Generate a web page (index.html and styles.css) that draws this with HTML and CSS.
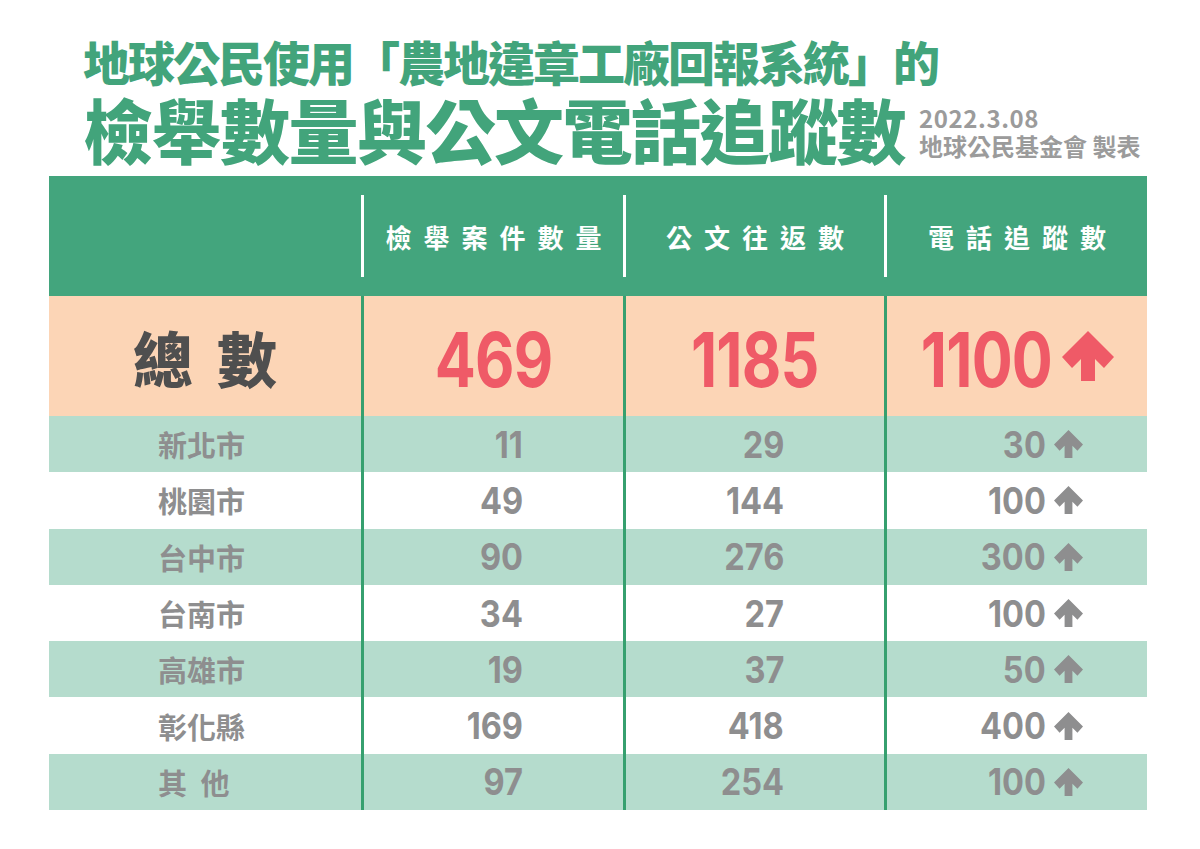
FILE: index.html
```html
<!DOCTYPE html>
<html lang="zh-Hant">
<head>
<meta charset="utf-8">
<title>檢舉數量與公文電話追蹤數</title>
<link rel="stylesheet" href="styles.css">
</head>
<body>
<div class="poster">
  <header class="heading">
    <h1 class="title-top">地球公民使用「農地違章工廠回報系統」的</h1>
    <div class="title-row">
      <h2 class="title-main">檢舉數量與公文電話追蹤數</h2>
      <div class="credit">
        <div class="date">2022.3.08</div>
        <div class="maker">地球公民基金會 製表</div>
      </div>
    </div>
  </header>

  <div class="table">
    <div class="row head">
      <div class="cell"></div>
      <div class="cell">檢舉案件數量</div>
      <div class="cell">公文往返數</div>
      <div class="cell">電話追蹤數</div>
    </div>
    <div class="row total">
      <div class="cell label"><span>總</span><span>數</span></div>
      <div class="cell"><span class="num">469</span></div>
      <div class="cell"><span class="num">1185</span></div>
      <div class="cell"><span class="num num-arrow">1100</span><svg class="up up-big" viewBox="0 0 52 50"><path d="M26 0 L52 26 L42 37 L33 28 L33 50 L19 50 L19 28 L10 37 L0 26 Z"/></svg></div>
    </div>
    <div class="row data tint">
      <div class="cell city">新北市</div>
      <div class="cell n"><span class="v">11</span></div>
      <div class="cell n"><span class="v">29</span></div>
      <div class="cell n last"><span class="v">30</span><svg class="up" viewBox="0 0 52 50"><path d="M26 0 L52 26 L42 37 L33 28 L33 50 L19 50 L19 28 L10 37 L0 26 Z"/></svg></div>
    </div>
    <div class="row data">
      <div class="cell city">桃園市</div>
      <div class="cell n"><span class="v">49</span></div>
      <div class="cell n"><span class="v">144</span></div>
      <div class="cell n last"><span class="v">100</span><svg class="up" viewBox="0 0 52 50"><path d="M26 0 L52 26 L42 37 L33 28 L33 50 L19 50 L19 28 L10 37 L0 26 Z"/></svg></div>
    </div>
    <div class="row data tint">
      <div class="cell city">台中市</div>
      <div class="cell n"><span class="v">90</span></div>
      <div class="cell n"><span class="v">276</span></div>
      <div class="cell n last"><span class="v">300</span><svg class="up" viewBox="0 0 52 50"><path d="M26 0 L52 26 L42 37 L33 28 L33 50 L19 50 L19 28 L10 37 L0 26 Z"/></svg></div>
    </div>
    <div class="row data">
      <div class="cell city">台南市</div>
      <div class="cell n"><span class="v">34</span></div>
      <div class="cell n"><span class="v">27</span></div>
      <div class="cell n last"><span class="v">100</span><svg class="up" viewBox="0 0 52 50"><path d="M26 0 L52 26 L42 37 L33 28 L33 50 L19 50 L19 28 L10 37 L0 26 Z"/></svg></div>
    </div>
    <div class="row data tint">
      <div class="cell city">高雄市</div>
      <div class="cell n"><span class="v">19</span></div>
      <div class="cell n"><span class="v">37</span></div>
      <div class="cell n last"><span class="v">50</span><svg class="up" viewBox="0 0 52 50"><path d="M26 0 L52 26 L42 37 L33 28 L33 50 L19 50 L19 28 L10 37 L0 26 Z"/></svg></div>
    </div>
    <div class="row data">
      <div class="cell city">彰化縣</div>
      <div class="cell n"><span class="v">169</span></div>
      <div class="cell n"><span class="v">418</span></div>
      <div class="cell n last"><span class="v">400</span><svg class="up" viewBox="0 0 52 50"><path d="M26 0 L52 26 L42 37 L33 28 L33 50 L19 50 L19 28 L10 37 L0 26 Z"/></svg></div>
    </div>
    <div class="row data tint">
      <div class="cell city">其 他</div>
      <div class="cell n"><span class="v">97</span></div>
      <div class="cell n"><span class="v">254</span></div>
      <div class="cell n last"><span class="v">100</span><svg class="up" viewBox="0 0 52 50"><path d="M26 0 L52 26 L42 37 L33 28 L33 50 L19 50 L19 28 L10 37 L0 26 Z"/></svg></div>
    </div>
  </div>
</div>
</body>
</html>
```

FILE: styles.css
```css
* { box-sizing: border-box; }
html, body { margin: 0; padding: 0; background: #fff; }
body {
  font-family: "Noto Sans CJK TC", "Noto Sans", sans-serif;
  width: 1200px;
  height: 849px;
  overflow: hidden;
}
.poster {
  padding: 36px 53px 0 49px;
}
.heading {
  padding-left: 34px;
  color: #42a47b;
}
.title-top {
  margin: 0;
  font-size: 47px;
  line-height: 50px;
  font-weight: 900;
  letter-spacing: -2px;
  white-space: nowrap;
}
.title-row {
  display: flex;
  align-items: flex-end;
  gap: 14px;
  margin-top: 6px;
}
.title-main {
  margin: 0;
  font-size: 70px;
  line-height: 74px;
  font-weight: 900;
  letter-spacing: -1.5px;
  white-space: nowrap;
}
.credit {
  color: #9b9b9b;
  font-weight: 700;
  padding-bottom: 6px;
}
.date {
  font-size: 24px;
  line-height: 27px;
  letter-spacing: 0.6px;
}
.maker {
  font-size: 24px;
  line-height: 29px;
  white-space: nowrap;
}

.table {
  margin-top: 10px;
  width: 1098px;
}
.row {
  display: grid;
  grid-template-columns: 312px 262px 261px 263px;
}
.head {
  height: 120px;
  background: #43a57d;
  align-items: center;
}
.head .cell {
  height: 82px;
  display: flex;
  align-items: center;
  justify-content: center;
  color: #fff;
  font-size: 26px;
  font-weight: 700;
  letter-spacing: 12px;
  padding-left: 12px;
}
.head .cell + .cell {
  border-left: 3px solid #fff;
}
.total {
  height: 120px;
  background: #fcd5b6;
}
.total .cell {
  display: flex;
  align-items: center;
  justify-content: center;
  padding-top: 6px;
  color: #ef5a67;
}
.total .cell + .cell,
.data .cell + .cell {
  border-left: 3px solid #36a06f;
}
.total .label {
  gap: 24px;
  color: #4f4f4f;
  font-size: 60px;
  font-weight: 900;
  padding-top: 0;
}
.num {
  display: inline-block;
  font-family: "Inter", "Roboto", sans-serif;
  font-variant-numeric: proportional-nums;
  font-weight: 700;
  font-size: 76px;
  line-height: 1;
  letter-spacing: -1px;
  transform: scaleX(0.8);
}
.num-arrow {
  transform-origin: right center;
  margin-left: -32px;
}
.up {
  display: block;
  flex: none;
  fill: currentColor;
  width: 29px;
  height: 28px;
  margin-left: 8px;
}
.up-big {
  width: 52px;
  height: 50px;
  margin-left: 10px;
  margin-top: -6px;
}
.data {
  height: 56.3px;
  background: #fff;
}
.data.tint {
  background: #b5dccd;
}
.data .cell {
  display: flex;
  align-items: center;
  color: #8e8e8f;
}
.city {
  padding-left: 109px;
  font-size: 29px;
  font-weight: 700;
  word-spacing: 7px;
}
.n {
  justify-content: flex-end;
  padding-right: 100px;
}
.n.last {
  padding-right: 64px;
}
.v {
  display: inline-block;
  font-family: "Inter", "Roboto", sans-serif;
  font-variant-numeric: proportional-nums;
  font-weight: 700;
  font-size: 37px;
  line-height: 1;
  letter-spacing: 0;
  transform: scaleX(0.88);
  transform-origin: right center;
}
```
